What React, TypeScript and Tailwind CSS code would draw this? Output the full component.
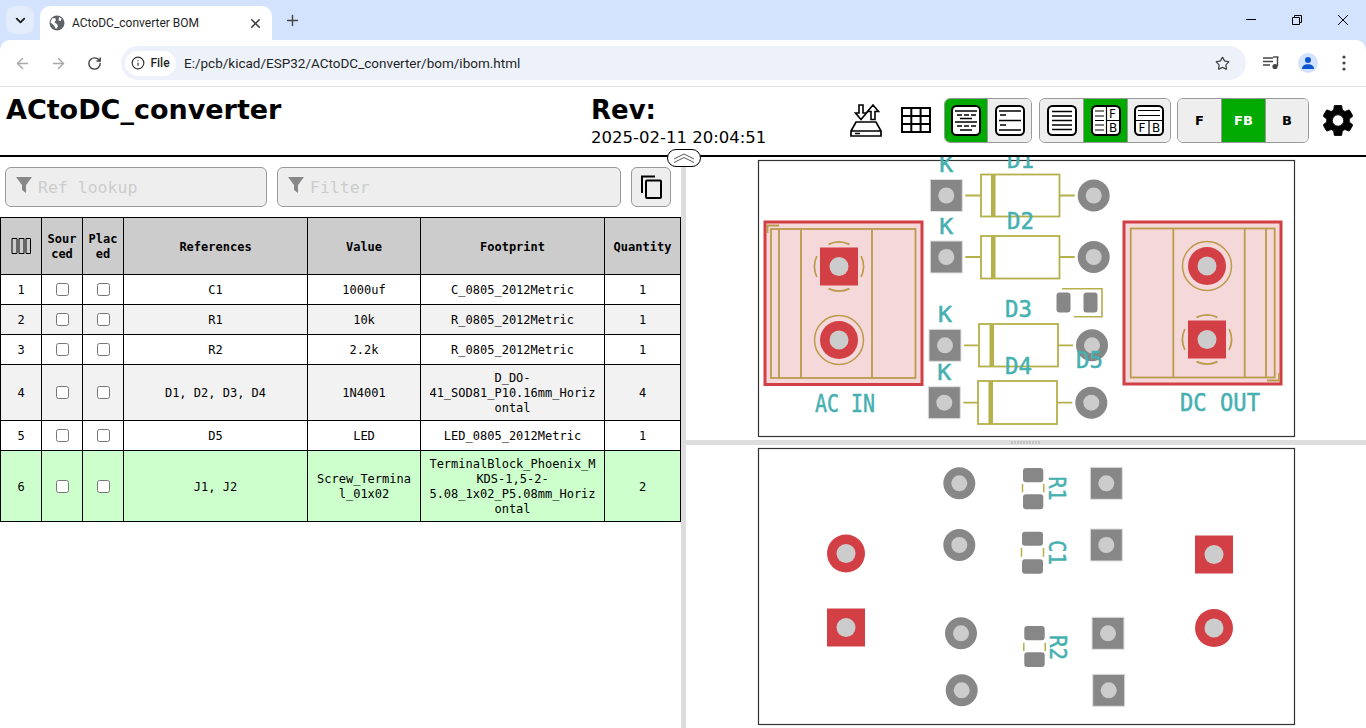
import { ArrowLeft, ArrowRight, ChevronDown, Info, Plus, RotateCw, Star, X } from "lucide-react";

const SILK = "#b4b04a";
const FAB = "#bb9a4c";
const RED = "#d24045";
const GRAY = "#878787";
const HOLE = "#cccccc";
const LABEL = "#45b0b0";
const LABEL_FONT = "'DejaVu Sans Mono', monospace";

const rows = [
    { n: 1, refs: "C1", value: "1000uf", fp: "C_0805_2012Metric", qty: 1, bg: "bg-white" },
    { n: 2, refs: "R1", value: "10k", fp: "R_0805_2012Metric", qty: 1, bg: "bg-[#f2f2f2]" },
    { n: 3, refs: "R2", value: "2.2k", fp: "R_0805_2012Metric", qty: 1, bg: "bg-white" },
    { n: 4, refs: "D1, D2, D3, D4", value: "1N4001", fp: "D_DO-41_SOD81_P10.16mm_Horizontal", qty: 4, bg: "bg-[#f2f2f2]" },
    { n: 5, refs: "D5", value: "LED", fp: "LED_0805_2012Metric", qty: 1, bg: "bg-white" },
    { n: 6, refs: "J1, J2", value: "Screw_Terminal_01x02", fp: "TerminalBlock_Phoenix_MKDS-1,5-2-5.08_1x02_P5.08mm_Horizontal", qty: 2, bg: "bg-[#ccffcc]" },
];

function Label({ x, y, size, w, children }: { x: number; y: number; size: number; w: number; children: string }) {
    return (
        <text x={x} y={y} fontFamily={LABEL_FONT} fontSize={size} fill={LABEL} stroke={LABEL} strokeWidth={0.5} textLength={w} lengthAdjust="spacingAndGlyphs">
            {children}
        </text>
    );
}

function RoundPad({ x, y, r, hole, color }: { x: number; y: number; r: number; hole: number; color: string }) {
    return (
        <g>
            <circle cx={x} cy={y} r={r} fill={color} />
            <circle cx={x} cy={y} r={hole} fill={HOLE} />
        </g>
    );
}

function SquarePad({ x, y, s, hole, color }: { x: number; y: number; s: number; hole: number; color: string }) {
    return (
        <g>
            <rect x={x - s / 2} y={y - s / 2} width={s} height={s} fill={color} stroke="#e0e0e0" strokeWidth={color === GRAY ? 1 : 0} />
            <circle cx={x} cy={y} r={hole} fill={HOLE} />
        </g>
    );
}

function Diode({ left, top, right, bottom, bandX, px, py, rx, label, labelX, labelY, kY }: {
    left: number; top: number; right: number; bottom: number; bandX: number; px: number; py: number; rx: number;
    label: string; labelX: number; labelY: number; kY: number;
}) {
    return (
        <g>
            <SquarePad x={px} y={py} s={32} hole={8} color={GRAY} />
            <RoundPad x={rx} y={py} r={16} hole={8} color={GRAY} />
            <rect x={left} y={top} width={right - left} height={bottom - top} fill="none" stroke={SILK} strokeWidth={1.8} />
            <rect x={bandX} y={top} width={4.5} height={bottom - top} fill={SILK} />
            <path d={`M${px + 19} ${py}H${left}M${right} ${py}H${rx - 19}`} stroke={SILK} strokeWidth={1.8} />
            <Label x={px - 7} y={kY} size={22} w={14}>K</Label>
            <Label x={labelX} y={labelY} size={23.5} w={27}>{label}</Label>
        </g>
    );
}

function Arcs({ x, y }: { x: number; y: number }) {
    const r = 24.5;
    const a = 10.5;
    const b = Math.sqrt(r * r - a * a);
    return (
        <path
            d={`M${x - a} ${y - b}A${r} ${r} 0 0 1 ${x + a} ${y - b}M${x + b} ${y - a}A${r} ${r} 0 0 1 ${x + b} ${y + a}M${x + a} ${y + b}A${r} ${r} 0 0 1 ${x - a} ${y + b}M${x - b} ${y + a}A${r} ${r} 0 0 1 ${x - b} ${y - a}`}
            fill="none"
            stroke={FAB}
            strokeWidth={1.7}
        />
    );
}

function FrontView() {
    return (
        <svg viewBox="686 157 680 283" className="block h-full w-full">
            <rect x={758.5} y={160.5} width={536} height={276} fill="#fff" stroke="#333" strokeWidth={1.2} />
            {/* J1 */}
            <rect x={765} y={222} width={157} height={162.5} fill="#f5d9da" stroke={RED} strokeWidth={3} />
            <rect x={771} y={229} width={144.5} height={149} fill="none" stroke={FAB} strokeWidth={1.8} />
            <path d="M779 229V378M801 229V378M872 229V378M767.5 233V225.5H779" fill="none" stroke={FAB} strokeWidth={1.8} />
            <Arcs x={839} y={266.5} />
            <SquarePad x={839} y={266.5} s={38} hole={9.5} color={RED} />
            <circle cx={839} cy={340} r={24.5} fill="none" stroke={FAB} strokeWidth={1.5} />
            <RoundPad x={839} y={340} r={19} hole={9.5} color={RED} />
            {/* J2 */}
            <rect x={1124} y={222} width={157} height={162} fill="#f5d9da" stroke={RED} strokeWidth={3} />
            <rect x={1130.7} y={228.5} width={144} height={149} fill="none" stroke={FAB} strokeWidth={1.8} />
            <path d="M1173.3 228.5V377.5M1244.7 228.5V377.5M1266 228.5V377.5M1267 380.5H1279V373" fill="none" stroke={FAB} strokeWidth={1.8} />
            <circle cx={1207} cy={266} r={24.5} fill="none" stroke={FAB} strokeWidth={1.5} />
            <RoundPad x={1207} y={266} r={19} hole={9.5} color={RED} />
            <Arcs x={1207} y={339.5} />
            <SquarePad x={1207} y={339.5} s={38} hole={9.5} color={RED} />
            {/* diodes */}
            <Diode left={981} top={174.5} right={1059.5} bottom={216.5} bandX={991} px={946.3} py={195.5} rx={1093.7} label="D1" labelX={1007} labelY={168} kY={172} />
            <Diode left={981} top={236} right={1059.5} bottom={278.5} bandX={991} px={946.3} py={257} rx={1093.7} label="D2" labelX={1007} labelY={229} kY={234} />
            <Diode left={979} top={324} right={1058} bottom={366.5} bandX={989.5} px={945} py={345.3} rx={1092} label="D3" labelX={1005} labelY={317} kY={322} />
            <Diode left={978} top={381} right={1057} bottom={424} bandX={988.5} px={944.3} py={402.7} rx={1091.3} label="D4" labelX={1005} labelY={374} kY={379.5} />
            {/* D5 */}
            <rect x={1056.5} y={292.5} width={14} height={20} rx={3} fill={GRAY} />
            <rect x={1083.5} y={292.5} width={14} height={20} rx={3} fill={GRAY} />
            <path d="M1062 288.7H1102V316.7H1074" fill="none" stroke={SILK} strokeWidth={1.6} />
            <Label x={1076} y={368} size={23.5} w={27}>D5</Label>
            <Label x={815} y={411.5} size={24.5} w={60}>AC IN</Label>
            <Label x={1180} y={411} size={24.5} w={80}>DC OUT</Label>
        </svg>
    );
}

function Smd({ left, right, t1, b1, t2, b2, tickT, tickB }: {
    left: number; right: number; t1: number; b1: number; t2: number; b2: number; tickT: number; tickB: number;
}) {
    return (
        <g>
            <rect x={left} y={t1} width={right - left} height={b1 - t1} rx={3} fill={GRAY} />
            <rect x={left} y={t2} width={right - left} height={b2 - t2} rx={3} fill={GRAY} />
            <path d={`M${left - 0.5} ${tickT}V${tickB}M${right + 0.5} ${tickT}V${tickB}`} stroke={SILK} strokeWidth={1.5} />
        </g>
    );
}

function RotText({ x, y, w, children }: { x: number; y: number; w: number; children: string }) {
    return (
        <text transform={`translate(${x} ${y}) rotate(90)`} fontFamily={LABEL_FONT} fontSize={23.5} fill={LABEL} stroke={LABEL} strokeWidth={0.5} textLength={w} lengthAdjust="spacingAndGlyphs">
            {children}
        </text>
    );
}

function BackView() {
    return (
        <svg viewBox="686 445 680 283" className="block h-full w-full">
            <rect x={758.5} y={448.5} width={536} height={276} fill="#fff" stroke="#333" strokeWidth={1.2} />
            <RoundPad x={846} y={553.5} r={19} hole={9.5} color={RED} />
            <SquarePad x={846} y={627.5} s={38} hole={9.5} color={RED} />
            <SquarePad x={1214} y={554.5} s={38} hole={9.5} color={RED} />
            <RoundPad x={1214} y={628} r={19} hole={9.5} color={RED} />
            <RoundPad x={959.3} y={483.3} r={16} hole={8} color={GRAY} />
            <SquarePad x={1106.3} y={483.3} s={32} hole={8} color={GRAY} />
            <RoundPad x={959.3} y={545} r={16} hole={8} color={GRAY} />
            <SquarePad x={1106.3} y={545} s={32} hole={8} color={GRAY} />
            <RoundPad x={961} y={633.3} r={16} hole={8} color={GRAY} />
            <SquarePad x={1108} y={633.3} s={32} hole={8} color={GRAY} />
            <RoundPad x={961.7} y={690.3} r={16} hole={8} color={GRAY} />
            <SquarePad x={1108.7} y={690.3} s={32} hole={8} color={GRAY} />
            <Smd left={1023} right={1043.3} t1={468} b1={482.3} t2={494.3} b2={509.3} tickT={484} tickB={492.3} />
            <Smd left={1022} right={1043} t1={531.7} b1={545.7} t2={559.3} b2={573.7} tickT={548} tickB={556.7} />
            <Smd left={1024.3} right={1044.7} t1={626} b1={640.3} t2={652.3} b2={667} tickT={642.7} tickB={651} />
            <RotText x={1048.5} y={476.5} w={24}>R1</RotText>
            <RotText x={1048.5} y={540} w={25}>C1</RotText>
            <RotText x={1050} y={635} w={25}>R2</RotText>
        </svg>
    );
}

function IconFrame({ children }: { children: React.ReactNode }) {
    return (
        <svg viewBox="0 0 30 31" className="h-[31px] w-[30px]">
            <rect x={1} y={1} width={28} height={29} rx={4.5} fill="#fff" stroke="#000" strokeWidth={2} />
            {children}
        </svg>
    );
}

const iconText = { fontFamily: "'DejaVu Sans', sans-serif", fontSize: 12, fill: "#000" };

function ToolButton({ active, last, width = "w-[43px]", children }: { active?: boolean; last?: boolean; width?: string; children: React.ReactNode }) {
    return (
        <div className={`flex h-full items-center justify-center ${width} ${active ? "bg-[#00aa00]" : "bg-[#eeeeee]"} ${last ? "" : "border-r border-[#999]"}`}>
            {children}
        </div>
    );
}

function ToolGroup({ children }: { children: React.ReactNode }) {
    return <div className="flex h-[45px] overflow-hidden rounded-[6px] border border-[#999]">{children}</div>;
}

function PageHeader() {
    return (
        <header className="flex h-[70px] shrink-0 border-b-2 border-black bg-white text-black [font-family:'DejaVu_Sans',sans-serif]">
            <h1 className="w-[591px] shrink-0 pl-[6px] pt-[5px] text-[27px] leading-[36px] font-bold">ACtoDC_converter</h1>
            <div className="w-[259px] shrink-0 pt-[5px]">
                <div className="text-[26px] leading-[36px] font-bold">Rev:</div>
                <div className="text-[16.5px] leading-[19px]">2025-02-11 20:04:51</div>
            </div>
            <div className="flex items-start pt-[11px]">
                <svg viewBox="0 0 32 33" className="mt-[6px] h-[33px] w-[32px]">
                    <path d="M9 1H13V9H16.5L11 15.5 5.5 9H9Z M21 15.5H25V7.5H28.5L23 1 17.5 7.5H21Z" fill="#fff" stroke="#000" strokeWidth={1.6} />
                    <path d="M6 18H26L31 27V32H1V27Z M1 27H31 M5 29.5H10" fill="#fff" stroke="#000" strokeWidth={1.7} />
                </svg>
                <svg viewBox="0 0 30 26" className="ml-[19px] mt-[9px] h-[26px] w-[30px]">
                    <path d="M1 1H29V25H1Z M10.3 1V25 M19.6 1V25 M1 9H29 M1 17H29" fill="none" stroke="#000" strokeWidth={2} />
                </svg>
                <div className="ml-[13px]">
                    <ToolGroup>
                        <ToolButton active>
                            <IconFrame>
                                <path d="M4 6H26M6 10H11M13 10H18M20 10H25M9 13.5H21M4 17H26M6 21H11M13 21H18M20 21H25M9 25H21" stroke="#000" strokeWidth={1.3} />
                            </IconFrame>
                        </ToolButton>
                        <ToolButton last>
                            <IconFrame>
                                <path d="M4 6H26M4 15.5H26M4 25H26M5 10H11M5 20H11" stroke="#000" strokeWidth={1.3} />
                            </IconFrame>
                        </ToolButton>
                    </ToolGroup>
                </div>
                <div className="ml-[7px]">
                    <ToolGroup>
                        <ToolButton width="w-[44px]">
                            <IconFrame>
                                <path d="M5 6.5H25M5 11H25M5 15.5H25M5 20H25M5 24.5H25" stroke="#000" strokeWidth={1.3} />
                            </IconFrame>
                        </ToolButton>
                        <ToolButton active width="w-[44px]">
                            <IconFrame>
                                <path d="M15.5 1V30M15.5 15.5H29M4 6H13M4 11H13M4 15.5H13M4 20H13M4 25H13" stroke="#000" strokeWidth={1.2} />
                                <text x={18} y={13} style={iconText}>F</text>
                                <text x={18} y={27} style={iconText}>B</text>
                            </IconFrame>
                        </ToolButton>
                        <ToolButton last width="w-[42px]">
                            <IconFrame>
                                <path d="M1 15.5H29M15 15.5V30M4 5.5H26M4 10.5H26" stroke="#000" strokeWidth={1.2} />
                                <text x={4.5} y={27} style={iconText}>F</text>
                                <text x={18} y={27} style={iconText}>B</text>
                            </IconFrame>
                        </ToolButton>
                    </ToolGroup>
                </div>
                <div className="ml-[6px]">
                    <ToolGroup>
                        <ToolButton width="w-[44px]"><span className="text-[13px] font-bold">F</span></ToolButton>
                        <ToolButton active width="w-[44px]"><span className="text-[13px] font-bold text-white">FB</span></ToolButton>
                        <ToolButton last width="w-[42px]"><span className="text-[13px] font-bold">B</span></ToolButton>
                    </ToolGroup>
                </div>
                <svg viewBox="2.5 2.5 19 19" className="ml-[14px] mt-[7px] h-[31px] w-[30px]">
                    <path
                        fill="#000"
                        stroke="#000"
                        strokeWidth={0.5}
                        d="M19.14 12.94c.04-.3.06-.61.06-.94 0-.32-.02-.64-.07-.94l2.03-1.58c.18-.14.23-.41.12-.61l-1.92-3.32c-.12-.22-.37-.29-.59-.22l-2.39.96c-.5-.38-1.03-.7-1.62-.94l-.36-2.54c-.04-.24-.24-.41-.48-.41h-3.84c-.24 0-.43.17-.47.41l-.36 2.54c-.59.24-1.13.57-1.62.94l-2.39-.96c-.22-.08-.47 0-.59.22L2.74 8.87c-.12.21-.08.47.12.61l2.03 1.58c-.05.3-.09.63-.09.94s.02.64.07.94l-2.03 1.58c-.18.14-.23.41-.12.61l1.92 3.32c.12.22.37.29.59.22l2.39-.96c.5.38 1.03.7 1.62.94l.36 2.54c.05.24.24.41.48.41h3.84c.24 0 .44-.17.47-.41l.36-2.54c.59-.24 1.13-.56 1.62-.94l2.39.96c.22.08.47 0 .59-.22l1.92-3.32c.12-.22.07-.47-.12-.61l-2.01-1.58zM12 15.6c-1.98 0-3.6-1.62-3.6-3.6s1.62-3.6 3.6-3.6 3.6 1.62 3.6 3.6-1.62 3.6-3.6 3.6z"
                    />
                </svg>
            </div>
        </header>
    );
}

function Funnel() {
    return (
        <svg viewBox="0 0 16 16" className="absolute left-[11px] top-[10px] h-[16px] w-[16px]">
            <path d="M0 0H16L10 8V16L6 13V8Z" fill="#888" />
        </svg>
    );
}

function FilterInput({ placeholder, width }: { placeholder: string; width: string }) {
    return (
        <div className={`relative h-[40px] ${width}`}>
            <Funnel />
            <input
                placeholder={placeholder}
                className="h-full w-full rounded-[6px] border border-[#999] bg-[#eeeeee] pl-[32px] text-[16.5px] placeholder:text-[#cccccc] [font-family:'DejaVu_Sans_Mono',monospace]"
            />
        </div>
    );
}

function BomTable() {
    const base = "border border-black text-center [overflow-wrap:break-word]";
    const cell = `${base} px-[6px] pt-[6px] pb-[4px]`;
    const narrow = `${base} px-[4px] pt-[6px] pb-[4px]`;
    const box = `${base} px-[5px] py-[5px]`;
    return (
        <table className="w-[681px] table-fixed border-collapse text-[12px] leading-[15px] text-black [font-family:'DejaVu_Sans_Mono',monospace]">
            <colgroup>
                <col className="w-[41px]" />
                <col className="w-[41px]" />
                <col className="w-[41px]" />
                <col className="w-[184px]" />
                <col className="w-[113px]" />
                <col className="w-[184px]" />
                <col className="w-[76px]" />
            </colgroup>
            <thead>
                <tr className="h-[57px] bg-[#cccccc] font-bold">
                    <th className={box}>
                        <svg viewBox="0 0 20 16" className="mx-auto h-[16px] w-[20px]">
                            <path d="M1 .5H6V15.5H1ZM8 .5H13V15.5H8ZM15 .5H19.5V15.5H15Z" fill="none" stroke="#000" strokeWidth={1} />
                        </svg>
                    </th>
                    <th className={narrow}>Sourced</th>
                    <th className={narrow}>Placed</th>
                    <th className={cell}>References</th>
                    <th className={cell}>Value</th>
                    <th className={cell}>Footprint</th>
                    <th className={narrow}>Quantity</th>
                </tr>
            </thead>
            <tbody>
                {rows.map((row) => (
                    <tr key={row.n} className={`${row.bg} ${row.n === 4 ? "h-[56px]" : row.n === 6 ? "h-[71px]" : "h-[30px]"}`}>
                        <td className={cell}>{row.n}</td>
                        <td className={box}><input type="checkbox" className="block mx-auto h-[13px] w-[13px]" /></td>
                        <td className={box}><input type="checkbox" className="block mx-auto h-[13px] w-[13px]" /></td>
                        <td className={cell}>{row.refs}</td>
                        <td className={cell}>{row.value}</td>
                        <td className={cell}>{row.fp}</td>
                        <td className={cell}>{row.qty}</td>
                    </tr>
                ))}
            </tbody>
        </table>
    );
}

function BrowserChrome() {
    return (
        <div className="h-[87px] shrink-0 bg-[#d3e3fd] [font-family:Roboto,sans-serif]">
            <div className="flex h-[40px]">
                <div className="ml-[6px] mt-[6px] flex h-[28px] w-[28px] items-center justify-center rounded-[9px] bg-[#e3ecfb]">
                    <ChevronDown size={15} strokeWidth={3} className="text-[#1f1f1f]" />
                </div>
                <div className="ml-[6px] mt-[6px] flex h-[34px] w-[232px] items-center rounded-t-[10px] bg-white pl-[9px] pr-[9px]">
                    <svg viewBox="0 0 16 16" className="h-[16px] w-[16px]">
                        <circle cx={8} cy={8} r={7.5} fill="#5f6368" />
                        <path d="M3 3.5 6 3 7 5 5.5 7.5 8 9 9 11.5 7 14 4.5 10 1.5 7.5ZM10 2 12.5 3.5 12 6 9.5 5.5Z" fill="#fff" />
                    </svg>
                    <span className="ml-[7px] text-[12px] text-[#1f1f1f]">ACtoDC_converter BOM</span>
                    <X size={15} strokeWidth={2.5} className="ml-auto text-[#3c3c3c]" />
                </div>
                <Plus size={17} strokeWidth={2} className="ml-[12px] mt-[12px] text-[#444]" />
                <div className="ml-auto flex">
                    <svg viewBox="0 0 10 10" className="mr-[36px] mt-[14px] h-[10px] w-[10px]"><path d="M0 5.5H10" stroke="#000" strokeWidth={1} /></svg>
                    <svg viewBox="0 0 10 10" className="mr-[36px] mt-[15px] h-[10px] w-[10px]"><path d="M.5 2.5H7.5V9.5H.5ZM2.5 2.5V.5H9.5V7.5H7.5" fill="none" stroke="#000" strokeWidth={1} /></svg>
                    <svg viewBox="0 0 10 10" className="mr-[18px] mt-[15px] h-[10px] w-[10px]"><path d="M0 0 10 10M10 0 0 10" stroke="#000" strokeWidth={1} /></svg>
                </div>
            </div>
            <div className="flex h-[47px] items-center rounded-t-[10px] border-b border-[#e0e0e0] bg-white">
                <ArrowLeft size={17} className="ml-[14px] text-[#a8a8a8]" />
                <ArrowRight size={17} className="ml-[19px] text-[#a8a8a8]" />
                <RotateCw size={15} strokeWidth={2.3} className="ml-[20px] text-[#444]" />
                <div className="ml-[19px] flex h-[34px] w-[1125px] items-center rounded-[17px] bg-[#edf2fa] pl-[4px] pr-[16px]">
                    <div className="flex h-[25px] w-[51px] items-center justify-center gap-[5px] rounded-[13px] bg-white">
                        <Info size={14} className="text-[#333]" />
                        <span className="text-[12px] font-medium text-[#1f1f1f]">File</span>
                    </div>
                    <span className="ml-[8px] text-[13.5px] text-[#1f1f1f]">E:/pcb/kicad/ESP32/ACtoDC_converter/bom/ibom.html</span>
                    <Star size={15} strokeWidth={2} className="ml-auto text-[#444]" />
                </div>
                <svg viewBox="0 0 16 14" className="ml-[17px] h-[14px] w-[16px]">
                    <path d="M0 2H10M0 5.5H10M0 9H7M14.5 1V10" stroke="#444" strokeWidth={1.4} fill="none" />
                    <path d="M10 1H15.5" stroke="#444" strokeWidth={1.4} />
                    <circle cx={12} cy={10.5} r={2.6} fill="#444" />
                </svg>
                <div className="ml-[19px] flex h-[20px] w-[20px] items-center justify-center rounded-full bg-[#d3e3fd]">
                    <svg viewBox="0 0 14 14" className="h-[14px] w-[14px]">
                        <circle cx={7} cy={4} r={3} fill="#0b57d0" />
                        <path d="M1 13C1 9.5 4 8.2 7 8.2S13 9.5 13 13Z" fill="#0b57d0" />
                    </svg>
                </div>
                <svg viewBox="0 0 4 16" className="ml-[24px] h-[16px] w-[4px]">
                    <circle cx={2} cy={2} r={1.6} fill="#444" />
                    <circle cx={2} cy={8} r={1.6} fill="#444" />
                    <circle cx={2} cy={14} r={1.6} fill="#444" />
                </svg>
            </div>
        </div>
    );
}

export default function App() {
    return (
        <div className="relative flex h-screen flex-col overflow-hidden bg-white">
            <BrowserChrome />
            <PageHeader />
            <div className="flex min-h-0 flex-1">
                <section className="w-[681px] shrink-0">
                    <div className="flex gap-[10px] pl-[5px] pt-[10px]">
                        <FilterInput placeholder="Ref lookup" width="w-[262px]" />
                        <FilterInput placeholder="Filter" width="w-[344px]" />
                        <button className="flex h-[40px] w-[40px] items-center justify-center rounded-[6px] border border-[#999] bg-[#eeeeee]">
                            <svg viewBox="0 0 22 24" className="h-[24px] w-[22px]">
                                <path d="M2 18V1.5H15" fill="none" stroke="#000" strokeWidth={2} />
                                <rect x={6} y={5.5} width={15} height={17.5} rx={1} fill="none" stroke="#000" strokeWidth={2} />
                            </svg>
                        </button>
                    </div>
                    <div className="mt-[10px]">
                        <BomTable />
                    </div>
                </section>
                <div className="w-[5px] shrink-0 bg-[#dddddd]" />
                <section className="flex min-w-0 flex-1 flex-col">
                    <div className="h-[283px] shrink-0"><FrontView /></div>
                    <div className="flex h-[5px] shrink-0 items-center justify-center bg-[#dddddd]">
                        <div className="h-[3px] w-[30px] bg-[repeating-linear-gradient(90deg,#c4c4c4_0,#c4c4c4_2px,transparent_2px,transparent_3px)]" />
                    </div>
                    <div className="min-h-0 flex-1"><BackView /></div>
                </section>
            </div>
            <div className="absolute left-[667px] top-[149px] flex h-[18px] w-[34px] items-center justify-center rounded-[9px] border border-black bg-white">
                <svg viewBox="0 0 22 10" className="h-[10px] w-[22px]">
                    <path d="M1 6 11 1 21 6M1 9.5 11 4.5 21 9.5" fill="none" stroke="#555" strokeWidth={1} />
                </svg>
            </div>
        </div>
    );
}
